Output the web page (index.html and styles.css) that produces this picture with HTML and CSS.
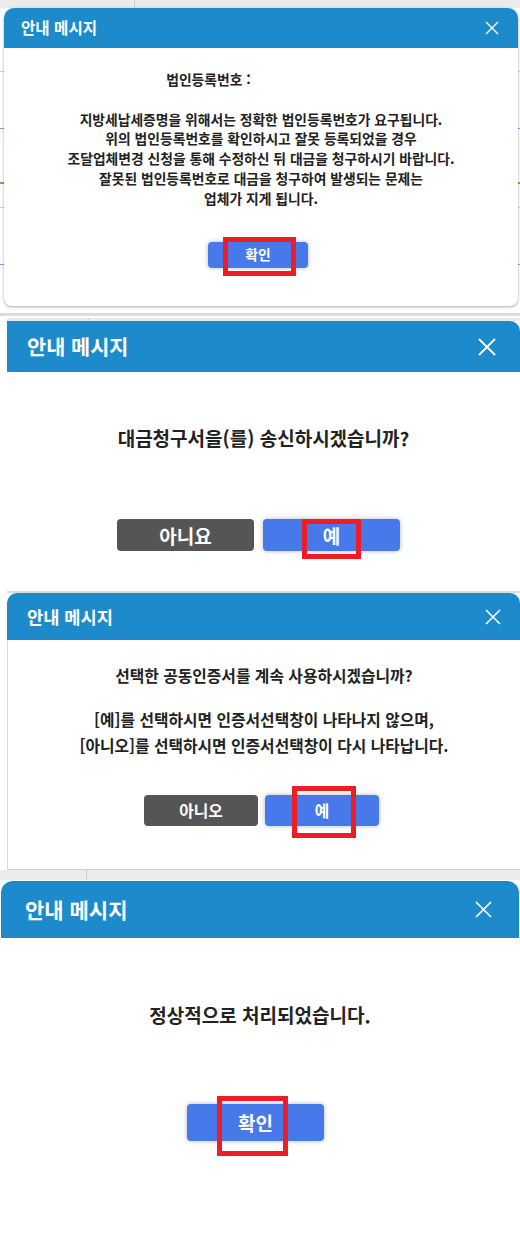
FILE: index.html
```html
<!DOCTYPE html>
<html lang="ko">
<head>
<meta charset="utf-8">
<title>안내 메시지</title>
<link rel="stylesheet" href="styles.css">
</head>
<body>
<section class="shot shot1">
  <div class="bgbar bgbar1"><span class="bg-div bg-div1"></span></div>
  <div class="dlg dlg1">
    <header class="dlg-head head1">
      <h2 class="dlg-title title1">안내 메시지</h2>
      <svg class="x-icon x1" viewBox="0 0 14 14"><path d="M1 1L13 13M13 1L1 13"/></svg>
    </header>
    <div class="dlg-body body1">
      <p class="msg msg1 msg1-label">법인등록번호 :</p>
      <p class="msg msg1 msg1-text">지방세납세증명을 위해서는 정확한 법인등록번호가 요구됩니다.<br>위의 법인등록번호를 확인하시고 잘못 등록되었을 경우<br>조달업체변경 신청을 통해 수정하신 뒤 대금을 청구하시기 바랍니다.<br>잘못된 법인등록번호로 대금을 청구하여 발생되는 문제는<br>업체가 지게 됩니다.</p>
      <div class="btns btns1">
        <button class="btn btn-blue btn1">확인<span class="mark mark1"></span></button>
      </div>
    </div>
  </div>
</section>

<section class="shot shot2">
  <div class="bgbar bgbar2"><span class="bg-div bg-div2"></span></div>
  <div class="dlg dlg2">
    <header class="dlg-head head2">
      <h2 class="dlg-title title2">안내 메시지</h2>
      <svg class="x-icon x2" viewBox="0 0 18 18"><path d="M1 1L17 17M17 1L1 17"/></svg>
    </header>
    <div class="dlg-body body2">
      <p class="msg msg2">대금청구서을(를) 송신하시겠습니까?</p>
      <div class="btns btns2">
        <button class="btn btn-gray btn2">아니요</button>
        <button class="btn btn-blue btn2 btn2-yes">예<span class="mark mark2"></span></button>
      </div>
    </div>
  </div>
</section>

<section class="shot shot3">
  <div class="topline3"></div>
  <div class="dlg dlg3">
    <header class="dlg-head head3">
      <h2 class="dlg-title title3">안내 메시지</h2>
      <svg class="x-icon x3" viewBox="0 0 16 16"><path d="M1 1L15 15M15 1L1 15"/></svg>
    </header>
    <div class="dlg-body body3">
      <p class="msg msg3">선택한 공동인증서를 계속 사용하시겠습니까?</p>
      <p class="msg msg3 msg3b">[예]를 선택하시면 인증서선택창이 나타나지 않으며,<br>[아니오]를 선택하시면 인증서선택창이 다시 나타납니다.</p>
      <div class="btns btns3">
        <button class="btn btn-gray btn3">아니오</button>
        <button class="btn btn-blue btn3">예<span class="mark mark3"></span></button>
      </div>
    </div>
  </div>
  <div class="bgbar bgbar3"><span class="bg-div bg-div3"></span></div>
</section>

<section class="shot shot4">
  <div class="dlg dlg4">
    <header class="dlg-head head4">
      <h2 class="dlg-title title4">안내 메시지</h2>
      <svg class="x-icon x4" viewBox="0 0 17 17"><path d="M1 1L16 16M16 1L1 16"/></svg>
    </header>
    <div class="dlg-body body4">
      <p class="msg msg4">정상적으로 처리되었습니다.</p>
      <div class="btns btns4">
        <button class="btn btn-blue btn4">확인<span class="mark mark4"></span></button>
      </div>
    </div>
  </div>
</section>
</body>
</html>
```

FILE: styles.css
```css
* { box-sizing: border-box; }
html, body { margin: 0; padding: 0; background: #fff; }
body {
  width: 520px;
  font-family: "Noto Sans CJK KR", "Noto Sans", sans-serif;
  color: #222;
}

.shot { overflow: hidden; }

/* ---------- background strips ---------- */
.bgbar { display: flex; background: #ebebeb; }
.bg-div { width: 1px; background: #cdcdcd; }

/* ---------- dialog shared ---------- */
.dlg { background: #fff; }
.dlg-head {
  display: flex;
  align-items: center;
  justify-content: space-between;
  background: #1d8bcb;
  color: #fff;
}
.dlg-title { margin: 0; font-weight: 700; line-height: 1; letter-spacing: 0; }
.x-icon { display: block; fill: none; stroke: #fff; stroke-linecap: butt; }
.msg { margin: 0; text-align: center; font-weight: 700; color: #222; }
.btns { display: flex; justify-content: center; }
.btn {
  position: relative;
  display: flex;
  align-items: center;
  justify-content: center;
  border: 0;
  margin: 0;
  padding: 0;
  font-family: inherit;
  font-weight: 700;
  color: #fff;
  border-radius: 4px;
  line-height: 1;
}
.btn-blue { background: #4879eb; box-shadow: 0 0 5px rgba(0, 0, 0, 0.28); }
.btn-gray { background: #555555; }
.mark { position: absolute; border: 5px solid #ee1c25; }

/* ---------- shot 1 ---------- */
.shot1 {
  height: 316px;
  background-color: #fff;
  background-repeat: no-repeat;
  background-image:
    linear-gradient(#d2d2d2, #d2d2d2),
    linear-gradient(#7d9ee6, #7d9ee6),
    linear-gradient(#c98a3c, #c98a3c),
    linear-gradient(#d2d2d2, #d2d2d2),
    linear-gradient(#7d9ee6, #7d9ee6),
    linear-gradient(#dcdcdc, #dcdcdc);
  background-size: 100% 1px, 100% 1px, 100% 2px, 100% 1px, 100% 1px, 100% 3px;
  background-position: 0 71px, 0 128px, 0 182px, 0 207px, 0 264px, 0 313px;
}
.bgbar1 { height: 8px; }
.bg-div1 { margin-left: 134px; }
.dlg1 {
  margin-left: 4px;
  width: 514px;
  height: 298px;
  border-radius: 10px 10px 8px 8px;
  box-shadow: 0 1px 3px rgba(0, 0, 0, 0.35);
  overflow: hidden;
}
.head1 { height: 40px; padding: 0 19px 0 17px; }
.title1 { font-size: 15.6px; }
.x1 { width: 14px; height: 14px; stroke-width: 1.4; }
.body1 { padding-top: 22px; }
.msg1 { font-size: 13.8px; line-height: 19.75px; }
.msg1-label { padding-right: 105px; }
.msg1-text { margin-top: 19.75px; }
.btns1 { margin-top: 34px; padding-right: 6px; }
.btn1 { width: 100px; height: 26px; font-size: 13.8px; }
.mark1 { left: 15px; top: -5px; width: 73px; height: 39px; }

/* ---------- shot 2 ---------- */
.shot2 { height: 275px; padding-top: 2px; }
.bgbar2 { height: 3px; margin-left: 7px; }
.bg-div2 { margin-left: 81px; }
.dlg2 {
  margin-left: 7px;
  width: 513px;
  height: 270px;
  border-radius: 0 10px 0 0;
  overflow: hidden;
}
.head2 { height: 51px; padding: 0 24px 0 20px; }
.title2 { font-size: 20.8px; }
.x2 { width: 18px; height: 18px; stroke-width: 1.8; }
.body2 { padding-top: 53px; }
.msg2 { font-size: 19px; line-height: 26px; }
.btns2 { margin-top: 68px; gap: 9px; padding-right: 10px; }
.btn2 { width: 137px; height: 32px; font-size: 19px; }
.mark2 { left: 39px; top: 0; width: 59px; height: 40px; }

/* ---------- shot 3 ---------- */
.shot3 { height: 289px; }
.topline3 { height: 2px; margin-left: 7px; background: #dcdcdc; }
.dlg3 { margin-left: 7px; width: 513px; }
.head3 { height: 47px; padding: 0 19px 0 20px; border-radius: 10px 10px 0 0; }
.title3 { font-size: 17.6px; }
.x3 { width: 16px; height: 16px; stroke-width: 1.6; }
.body3 {
  height: 230px;
  padding-top: 23px;
  border-left: 1px solid #dcdcdc;
  border-bottom: 1px solid #cfcfcf;
}
.msg3 { font-size: 15.8px; line-height: 26px; }
.msg3b { margin-top: 18px; }
.btns3 { margin-top: 36px; gap: 7px; padding-right: 5px; }
.btn3 { width: 114px; height: 31px; font-size: 15.8px; }
.mark3 { left: 27px; top: -9px; width: 64px; height: 52px; }
.bgbar3 { height: 10px; }
.bg-div3 { margin-left: 86px; }

/* ---------- shot 4 ---------- */
.shot4 { padding-top: 1px; }
.dlg4 { margin-left: 1px; width: 518px; }
.head4 { height: 57px; padding: 0 27px 0 24px; border-radius: 12px 12px 0 0; }
.title4 { font-size: 21px; }
.x4 { width: 17px; height: 17px; stroke-width: 1.7; }
.body4 { height: 256px; padding-top: 64px; }
.msg4 { font-size: 19px; line-height: 26px; }
.btns4 { margin-top: 76px; padding-right: 9px; }
.btn4 { width: 137px; height: 37px; font-size: 19px; }
.mark4 { left: 30px; top: -8px; width: 71px; height: 60px; }
```
